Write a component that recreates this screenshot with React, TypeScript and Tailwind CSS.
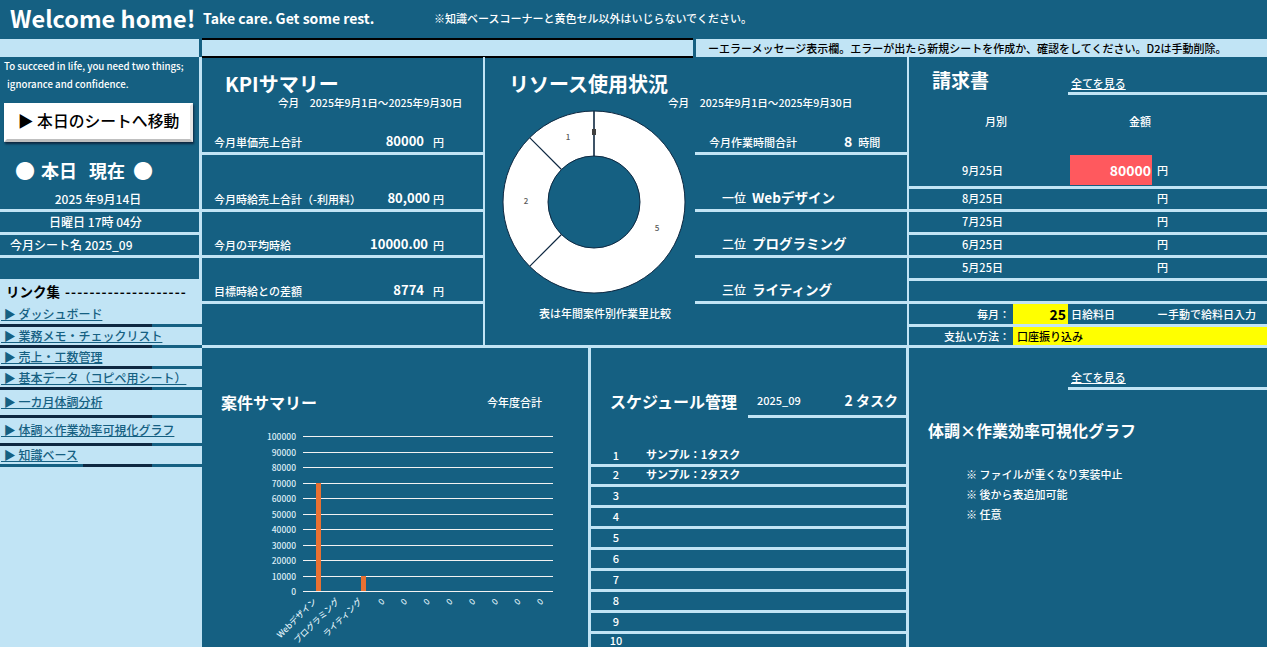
const jp = '"Noto Sans CJK JP", "Noto Sans", sans-serif';

const links = [
  { label: ' ▶ ダッシュボード', h: 'h-[21px]', pb: 'pb-[1px]' },
  { label: ' ▶ 業務メモ・チェックリスト', h: 'h-[18px]', pb: 'pb-[0px]' },
  { label: ' ▶ 売上・工数管理', h: 'h-[18px]', pb: 'pb-[0px]' },
  { label: ' ▶ 基本データ（コピペ用シート）', h: 'h-[18px]', pb: 'pb-[0px]' },
  { label: ' ▶ 一カ月体調分析', h: 'h-[25px]', pb: 'pb-[4px]' },
  { label: ' ▶ 体調×作業効率可視化グラフ', h: 'h-[25px]', pb: 'pb-[4px]' },
  { label: ' ▶ 知識ベース', h: 'h-[18px]', pb: 'pb-[0px]' },
];

const kpis = [
  { label: '今月単価売上合計', value: '80000', h: 'h-[98px]', unit: 'w-[59px] pl-[9px]' },
  { label: '今月時給売上合計（-利用料）', value: '80,000', h: 'h-[57px]', unit: 'w-[53px] pl-[3px]' },
  { label: '今月の平均時給', value: '10000.00', h: 'h-[46px]', unit: 'w-[55px] pl-[5px]' },
  { label: '目標時給との差額', value: '8774', h: 'h-[46px]', unit: 'w-[59px] pl-[9px]' },
];

const ranks = [
  { rank: '一位', name: 'Webデザイン', h: 'h-[57px]' },
  { rank: '二位', name: 'プログラミング', h: 'h-[46px]' },
  { rank: '三位', name: 'ライティング', h: 'h-[46px]' },
];

const invoices = ['8月25日', '7月25日', '6月25日', '5月25日'];

const tasks = ['サンプル：1タスク', 'サンプル：2タスク', '', '', '', '', '', '', ''];

const yTicks = [100000, 90000, 80000, 70000, 60000, 50000, 40000, 30000, 20000, 10000, 0];
const xLabels = ['Webデザイン', 'プログラミング', 'ライティング', '0', '0', '0', '0', '0', '0', '0', '0'];

function polar(r: number, deg: number) {
  const a = ((deg - 90) * Math.PI) / 180;
  return { x: 92 + r * Math.cos(a), y: 92 + r * Math.sin(a) };
}

function Donut() {
  const spokes = [225, 315];
  return (
    <svg width="184" height="184" viewBox="0 0 184 184" className="block">
      <circle cx="92" cy="92" r="68.5" fill="none" stroke="#ffffff" strokeWidth="45" />
      <circle cx="92" cy="92" r="91" fill="none" stroke="#0e2841" strokeWidth="1" />
      <circle cx="92" cy="92" r="46" fill="none" stroke="#0e2841" strokeWidth="1" />
      {spokes.map((deg) => {
        const a = polar(46, deg);
        const b = polar(91, deg);
        return <line key={deg} x1={a.x} y1={a.y} x2={b.x} y2={b.y} stroke="#0e2841" strokeWidth="1.2" />;
      })}
      <line x1="92" y1="1" x2="92" y2="46" stroke="#0e2841" strokeWidth="1.6" />
      <rect x="90" y="19" width="4" height="6" fill="#404040" />
      <g fill="#595959" fontSize="8" textAnchor="middle" fontFamily={jp}>
        <text x="66" y="30">1</text>
        <text x="24" y="94">2</text>
        <text x="155" y="121">5</text>
      </g>
    </svg>
  );
}

function BarChart() {
  return (
    <svg width="386" height="252" viewBox="0 0 386 252" className="block">
      {yTicks.map((t, i) => {
        const y = Math.round(40 + i * 15.5) + 0.5;
        return (
          <g key={t}>
            <line x1="101" x2="351" y1={y} y2={y} stroke="#f2f2f2" strokeWidth="1" />
            <text x="94" y={y + 3} fill="#dcecf5" fontSize="8.5" textAnchor="end" fontFamily={jp}>
              {t}
            </text>
          </g>
        );
      })}
      <rect x="114" y="87" width="5" height="108" fill="#e97132" />
      <rect x="159" y="180" width="5" height="15" fill="#e97132" />
      {xLabels.map((l, i) => {
        const x = 115 + i * 22.7;
        return (
          <text
            key={i}
            x={x}
            y="206"
            fill="#dcecf5"
            fontSize="8.5"
            textAnchor="end"
            fontFamily={jp}
            transform={`rotate(-45 ${x} 206)`}
          >
            {l}
          </text>
        );
      })}
    </svg>
  );
}

// divider under each link: dark navy up to x=152, theme blue after that
function LinkBar({ last }: { last: boolean }) {
  return (
    <div className="h-[3px] flex">
      {last && <div className="w-[83px] bg-[#156082]" />}
      <div className={last ? 'w-[69px] bg-[#0e2841]' : 'w-[152px] bg-[#0e2841]'} />
      <div className="flex-1 bg-[#156082]" />
    </div>
  );
}

export default function App() {
  return (
    <div
      className="w-[1267px] h-[647px] overflow-hidden bg-[#156082] text-white text-[11px] font-medium"
      style={{ fontFamily: jp }}
    >
      {/* header */}
      <div className="h-[39px] flex items-center pb-[2px]">
        <span className="ml-[10px] w-[193px] text-[23.5px] font-bold whitespace-nowrap leading-none">Welcome home!</span>
        <span className="w-[231px] text-[14px] font-bold whitespace-nowrap">Take care. Get some rest.</span>
        <span className="whitespace-nowrap">※知識ベースコーナーと黄色セル以外はいじらないでください。</span>
      </div>

      {/* error row */}
      <div className="h-[18px] flex">
        <div className="w-[199px] bg-[#c1e4f5]" />
        <div className="ml-[3px] w-[491px] h-[20px] -mt-[1px] relative bg-[#c1e4f5] border-y-2 border-black" />
        <div className="ml-[3px] flex-1 bg-[#c1e4f5] text-black pl-[12px] flex items-center whitespace-nowrap">
          ーエラーメッセージ表示欄。エラーが出たら新規シートを作成か、確認をしてください。D2は手動削除。
        </div>
      </div>

      <div className="h-[590px] flex">
        {/* sidebar */}
        <aside className="w-[202px] shrink-0 flex flex-col">
          <div className="h-[222px] border-r-[3px] border-[#c1e4f5] flex flex-col">
            <div className="h-[46px] text-[9.7px] leading-[18px] pl-[4px] whitespace-nowrap">
              <p>To succeed in life, you need two things;</p>
              <p className="pl-[3px]">ignorance and confidence.</p>
            </div>
            <button className="ml-[4px] w-[189px] h-[39px] pb-[3px] bg-white shadow-[1px_2px_2px_#0e2841] border-[3px] border-white border-b-[#bfbfbf] border-r-[#e6e6e6] text-black text-[15.8px] font-medium whitespace-nowrap">
              ▶ 本日のシートへ移動
            </button>
            <div className="h-[45px] flex items-center pl-[15px] pt-[12px] text-[18px] font-bold whitespace-nowrap">
              <span className="text-[20px] leading-none">●</span>
              <span className="ml-[6px]">本日</span>
              <span className="ml-[12px]">現在</span>
              <span className="ml-[8px] text-[20px] leading-none">●</span>
            </div>
            <div className="h-[25px] border-b-[3px] border-[#c1e4f5] flex items-center justify-center pt-[1px] pr-[3px] text-[12px]">
              2025 年9月14日
            </div>
            <div className="h-[23px] border-b-[3px] border-[#c1e4f5] flex items-center justify-center pr-[8px] text-[12px]">
              日曜日 17時 04分
            </div>
            <div className="h-[23px] border-b-[3px] border-[#c1e4f5] flex items-center pl-[10px] text-[12px]">今月シート名 2025_09</div>
          </div>
          <div className="flex-1 bg-[#c1e4f5] text-[#156082]">
            <div className="h-[24px] pl-[6px] pb-[3px] flex items-end text-[13.5px] font-bold text-black whitespace-nowrap leading-[18px]">
              リンク集 <span className="ml-[5px] tracking-[1.1px]">--------------------</span>
            </div>
            {links.map((l, i) => (
              <div key={l.label}>
                <div className={`${l.h} ${l.pb} flex items-end`}>
                  <a className="ml-[1px] text-[12px] underline whitespace-pre leading-[18px]">{l.label}</a>
                </div>
                <LinkBar last={i === links.length - 1} />
              </div>
            ))}
          </div>
        </aside>

        {/* main */}
        <main className="flex-1 flex flex-col">
          <div className="h-[291px] shrink-0 flex border-b-[3px] border-[#c1e4f5]">
            {/* KPI */}
            <section className="w-[283px] border-r-[2px] border-[#c1e4f5] relative">
              <h2 className="absolute left-[23px] top-[12px] text-[20px] font-bold whitespace-nowrap">KPIサマリー</h2>
              <p className="absolute left-[76px] top-[38px] text-[10.6px] whitespace-nowrap">今月　2025年9月1日～2025年9月30日</p>
              {kpis.map((k) => (
                <div key={k.label} className={`${k.h} border-b-[3px] border-[#c1e4f5] flex items-end pb-[2px] pl-[12px]`}>
                  <span className="whitespace-nowrap">{k.label}</span>
                  <span className="ml-auto text-[13px] font-bold leading-[18px]">{k.value}</span>
                  <span className={`${k.unit} shrink-0`}>円</span>
                </div>
              ))}
            </section>

            {/* resources */}
            <section className="w-[424px] border-r-[2px] border-[#c1e4f5] flex flex-col">
              <div className="h-[53px] relative">
                <h2 className="absolute left-[24px] top-[12px] text-[20px] font-bold whitespace-nowrap">リソース使用状況</h2>
                <p className="absolute left-[183px] top-[38px] text-[10.6px] whitespace-nowrap">今月　2025年9月1日～2025年9月30日</p>
              </div>
              <div className="flex flex-1">
                <div className="w-[210px] shrink-0 pl-[17px]">
                  <Donut />
                  <p className="mt-[11px] w-[206px] text-center whitespace-nowrap">表は年間案件別作業里比較</p>
                </div>
                <div className="flex-1">
                  <div className="h-[45px] border-b-[3px] border-[#c1e4f5] flex items-end pb-[2px] pl-[14px]">
                    <span className="w-[135px]">今月作業時間合計</span>
                    <span className="text-[14px] font-bold leading-[18px]">8</span>
                    <span className="ml-[6px]">時間</span>
                  </div>
                  {ranks.map((r) => (
                    <div key={r.rank} className={`${r.h} border-b-[3px] border-[#c1e4f5] flex items-end pb-[2px] pl-[27px] whitespace-nowrap`}>
                      <span className="text-[12px]">{r.rank}</span>
                      <span className="ml-[6px] text-[13.5px] font-bold">{r.name}</span>
                    </div>
                  ))}
                </div>
              </div>
            </section>

            {/* invoices */}
            <section className="flex-1 flex flex-col">
              <div className="h-[38px] flex items-end">
                <h2 className="w-[159px] pl-[23px] text-[19px] font-bold leading-[28px] pb-[1px]">請求書</h2>
                <div className="flex-1 border-b-[3px] border-[#c1e4f5] pl-[3px] pb-[1px] underline">全てを見る</div>
              </div>
              <div className="h-[60px] pt-[18px] flex whitespace-nowrap">
                <span className="w-[174px] text-center">月別</span>
                <span className="w-[114px] text-center">金額</span>
              </div>
              <div className="h-[34px] border-b-[3px] border-[#c1e4f5] flex">
                <span className="w-[161px] flex items-center justify-center pr-[14px]">9月25日</span>
                <span className="w-[82px] h-[30px] bg-[#ff595e] text-[14px] font-bold flex items-center justify-end pr-[1px]">80000</span>
                <span className="pl-[5px] flex items-center">円</span>
              </div>
              {invoices.map((date) => (
                <div key={date} className="h-[23px] pb-[1px] border-b-[3px] border-[#c1e4f5] flex items-center">
                  <span className="w-[161px] text-center pr-[14px]">{date}</span>
                  <span className="w-[82px]" />
                  <span className="pl-[5px]">円</span>
                </div>
              ))}
              <div className="h-[23px] border-b-[3px] border-[#c1e4f5]" />
              <div className="h-[23px] border-b-[3px] border-[#c1e4f5] flex items-stretch whitespace-nowrap">
                <span className="w-[104px] flex items-center justify-end pr-[3px]">毎月：</span>
                <span className="w-[55px] bg-[#ffff00] text-black text-[14px] font-bold flex items-center justify-end pr-[2px]">25</span>
                <span className="w-[89px] pl-[3px] flex items-center">日給料日</span>
                <span className="flex items-center">ー手動で給料日入力</span>
              </div>
              <div className="flex-1 flex items-stretch whitespace-nowrap">
                <span className="w-[104px] flex items-center justify-end pr-[3px]">支払い方法：</span>
                <span className="flex-1 bg-[#ffff00] text-black flex items-center pl-[4px]">口座振り込み</span>
              </div>
            </section>
          </div>

          <div className="flex-1 flex min-h-0">
            {/* projects */}
            <section className="w-[386px] relative overflow-hidden">
              <h2 className="absolute left-[19px] top-[42px] text-[16px] font-bold whitespace-nowrap">案件サマリー</h2>
              <span className="absolute left-[285px] top-[46px]">今年度合計</span>
              <div className="pt-[48px]">
                <BarChart />
              </div>
            </section>

            {/* schedule */}
            <section className="w-[321px] border-x-[3px] border-[#c1e4f5] flex flex-col overflow-hidden">
              <div className="h-[70px] shrink-0 flex items-end">
                <h2 className="w-[157px] pl-[19px] pb-[5px] text-[16px] font-bold whitespace-nowrap">スケジュール管理</h2>
                <div className="flex-1 border-b-[3px] border-[#c1e4f5] h-[32px] flex items-center pl-[9px] pr-[8px]">
                  <span>2025_09</span>
                  <span className="ml-auto text-[14px] font-bold">2 タスク</span>
                </div>
              </div>
              <div className="h-[49px] shrink-0 pb-[1px] border-b-[3px] border-[#c1e4f5] flex items-end">
                <span className="w-[55px] text-center pr-[5px]">1</span>
                <span className="font-bold leading-[18px]">{tasks[0]}</span>
              </div>
              {tasks.slice(1).map((t, i) => (
                <div
                  key={i}
                  className={`${i === 0 ? 'h-[20px]' : 'h-[21px]'} shrink-0 pb-[3px] leading-[14px] border-b-[3px] border-[#c1e4f5] flex items-center`}
                >
                  <span className="w-[55px] text-center pr-[5px]">{i + 2}</span>
                  <span className="font-bold">{t}</span>
                </div>
              ))}
              {/* last row runs into the bottom of the window */}
              <div className="h-[13px] shrink-0 leading-[13px] flex items-center">
                <span className="w-[55px] text-center pr-[5px]">10</span>
              </div>
            </section>

            {/* health graph */}
            <section className="flex-1">
              <div className="h-[42px] ml-[159px] pl-[3px] pb-[2px] border-b-[3px] border-[#c1e4f5] flex items-end underline">
                全てを見る
              </div>
              <h2 className="mt-[29px] pl-[19px] text-[16px] font-bold leading-[22px] whitespace-nowrap">体調×作業効率可視化グラフ</h2>
              <ul className="mt-[25px] pl-[57px] flex flex-col gap-[4px] leading-[16px]">
                <li>※ ファイルが重くなり実装中止</li>
                <li>※ 後から表追加可能</li>
                <li>※ 任意</li>
              </ul>
            </section>
          </div>
        </main>
      </div>
    </div>
  );
}
